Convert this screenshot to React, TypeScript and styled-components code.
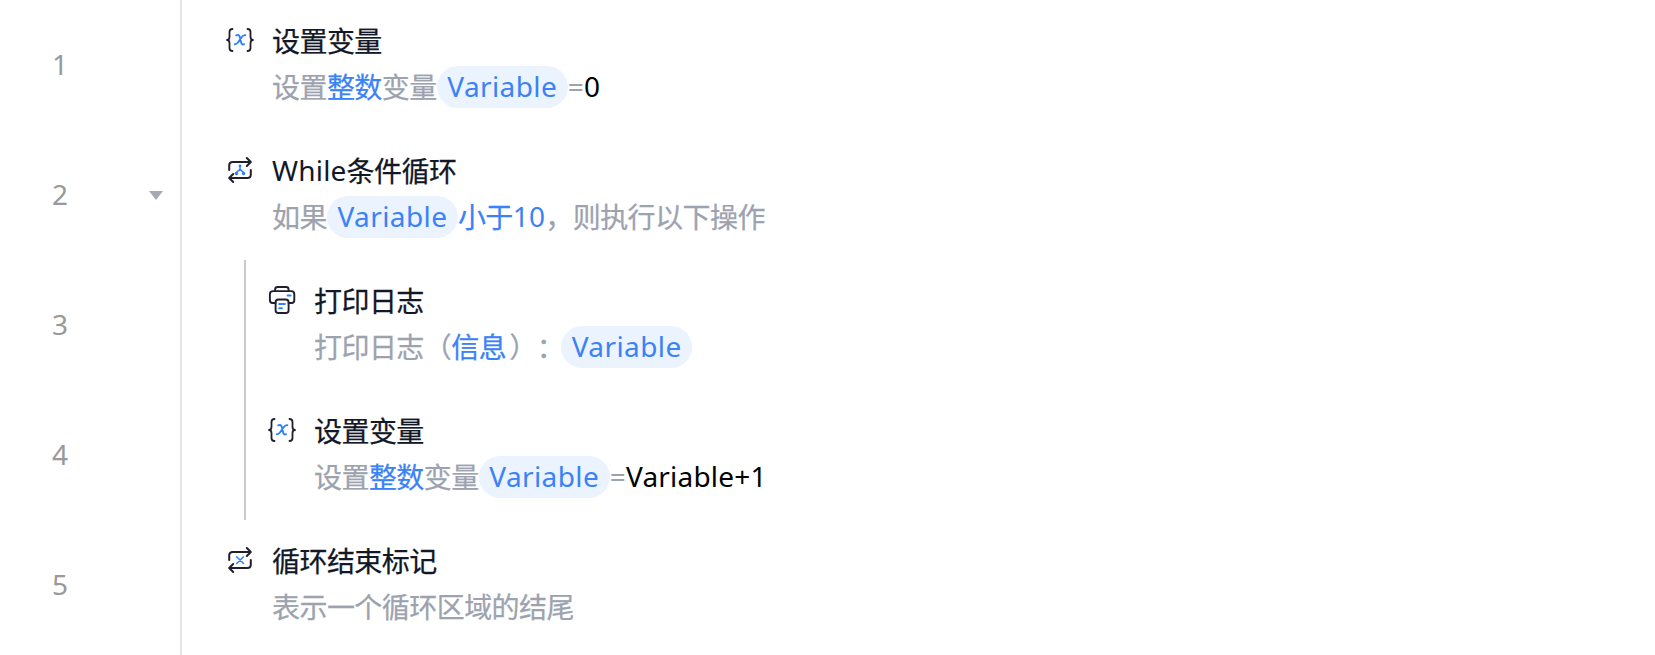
import React from 'react';
import styled, { createGlobalStyle } from 'styled-components';

const GlobalStyle = createGlobalStyle`
  * { box-sizing: border-box; }
  body { margin: 0; background: #fff; overflow: hidden; }
`;

const Page = styled.main`
  display: flex;
  width: 100%;
  height: 655px;
  overflow: hidden;
  background: #fff;
  font-family: 'Noto Sans', 'Noto Sans CJK SC', sans-serif;
  font-size: 28px;
`;

const Gutter = styled.aside`
  flex: none;
  width: 182px;
  border-right: 2px solid #e5e6eb;
`;

const GutterRow = styled.div`
  display: flex;
  align-items: center;
  justify-content: space-between;
  height: 130px;
  padding: 0 17px 0 52px;
  color: #999;
`;

const LineNumber = styled.span`
  padding-bottom: 3px;
`;

const Flow = styled.section`
  flex: 1;
  padding-left: 43px;
`;

const Nested = styled.div`
  margin-left: 19px;
  padding-left: 21px;
  border-left: 2px solid #c9c9c9;
`;

const Step = styled.article`
  display: flex;
  gap: 17px;
  height: 130px;
  padding-top: 20px;
`;

const IconSlot = styled.div`
  flex: none;
  width: 30px;
  height: 40px;
  display: flex;
  align-items: center;
  svg { display: block; }
`;

const Body = styled.div`
  display: flex;
  flex-direction: column;
  gap: 4px;
`;

const Line = styled.div<{ $tone: string }>`
  display: flex;
  align-items: center;
  height: 42px;
  padding-bottom: 2px;
  line-height: 40px;
  white-space: nowrap;
  color: ${(p) => p.$tone};
`;

const Han = styled.span<{ $accent?: boolean }>`
  font-family: 'Noto Sans CJK SC', sans-serif;
  letter-spacing: -0.55px;
  text-spacing-trim: space-all;
  -webkit-text-stroke: 0.25px currentColor;
  ${(p) => p.$accent && 'color: #3b82f6;'}
`;

const ClosingMark = styled(Han)`
  width: 27.5px;
  padding-left: 3px;
`;

const Latin = styled.span<{ $color?: string }>`
  letter-spacing: 0.2px;
  color: ${(p) => p.$color ?? 'inherit'};
`;

const Pill = styled.span`
  flex: none;
  align-self: flex-start;
  width: 131px;
  height: 42px;
  border-radius: 21px;
  background: #ebf3ff;
  color: #3b82f6;
  text-align: center;
  letter-spacing: 0.4px;
`;

const INK = '#111827';
const MUTED = '#9ca3af';
const BLUE = '#3b82f6';

const BracesIcon = () => (
  <svg width="30" height="30" viewBox="0 0 30 30" fill="none" strokeLinecap="round" strokeLinejoin="round">
    <g stroke="#211f2d" strokeWidth="1.8">
      <path d="M7.5 4C5 4 4.500 5 4.500 7V11.700C4.500 13.700 3.500 15 2 15C3.500 15 4.500 16.300 4.500 18.300V23C4.500 25 5 26 7.500 26" />
      <path d="M22.500 4C25 4 25.500 5 25.500 7V11.700C25.500 13.700 26.500 15 28 15C26.500 15 25.500 16.300 25.500 18.300V23C25.500 25 25 26 22.500 26" />
    </g>
    <path d="M11.200 10.300c2-.8 3.100-.2 3.600 1.600l1.300 5.400c.4 1.900 1.200 2.700 3 1.900M20.300 10.200c-1.600-.3-2.700.6-3.900 2.300l-2.700 4.100c-1.200 1.900-2.200 2.900-3.900 2.600" stroke="#2f80ff" strokeWidth="1.900" />
  </svg>
);

const LoopIcon = ({ children }: { children: React.ReactNode }) => (
  <svg width="30" height="30" viewBox="0 0 30 30" fill="none" strokeLinecap="round" strokeLinejoin="round">
    <g stroke="#211f2d" strokeWidth="2">
      <path d="M4.200 15V10.500c0-2.200 1.200-3.500 3.500-3.500h18M21.800 3l4 4-4 4" />
      <path d="M25.800 15v4.500c0 2.200-1.200 3.500-3.500 3.500h-18M8.200 19l-4 4 4 4" />
    </g>
    <g stroke="#2f80ff" strokeWidth="1.500">{children}</g>
  </svg>
);

const WhileIcon = () => (
  <LoopIcon>
    <path d="M15 11.500v2.700M15 14.200l-3.400 3.200M15 14.200l3.400 3.200" />
    <g fill="#2f80ff" stroke="none">
      <circle cx="15" cy="10.900" r="1.400" />
      <circle cx="11.400" cy="18.500" r="1.700" />
      <circle cx="18.600" cy="18.500" r="1.700" />
    </g>
  </LoopIcon>
);

const EndIcon = () => (
  <LoopIcon>
    <path d="M11.700 11.700l6.800 6.800M18.500 11.700l-6.800 6.800" />
  </LoopIcon>
);

const PrinterIcon = () => (
  <svg width="30" height="30" viewBox="-0.6 0 30 30" fill="none" strokeLinecap="round" strokeLinejoin="round">
    <g stroke="#211f2d" strokeWidth="1.900">
      <path d="M7.500 6V4.500c0-1.500.9-2.500 2.500-2.500h8.500c1.600 0 2.500 1 2.500 2.500V6" />
      <path d="M8 18H5c-1.700 0-2.700-1-2.700-2.700V9.200c0-1.900 1.200-3.100 3.100-3.100h18.200c1.900 0 3.100 1.200 3.100 3.100v6.100c0 1.700-1 2.700-2.700 2.700h-3" />
      <path d="M10.800 14.500h7.400c1.800 0 2.800 1 2.800 2.800v7.900c0 1.800-1 2.800-2.800 2.800h-7.400c-1.800 0-2.800-1-2.800-2.800v-7.900c0-1.800 1-2.800 2.800-2.800z" />
    </g>
    <path d="M20 10.500h3M11.600 19h5.700M11.600 23.200h2.700" stroke="#2f80ff" strokeWidth="1.900" />
  </svg>
);

const Caret = () => (
  <svg width="14" height="9" viewBox="0 0 14 9">
    <path d="M0 0h14L7 9z" fill="#a5a9b4" />
  </svg>
);

type StepRowProps = { icon: React.ReactNode; title: React.ReactNode; children: React.ReactNode };

const StepRow = ({ icon, title, children }: StepRowProps) => (
  <Step>
    <IconSlot>{icon}</IconSlot>
    <Body>
      <Line $tone={INK}>{title}</Line>
      <Line $tone={MUTED}>{children}</Line>
    </Body>
  </Step>
);

const Assignment = ({ value }: { value: string }) => (
  <StepRow icon={<BracesIcon />} title={<Han>设置变量</Han>}>
    <Han>设置</Han>
    <Han $accent>整数</Han>
    <Han>变量</Han>
    <Pill>Variable</Pill>
    <Latin>=</Latin>
    <Latin $color="#000">{value}</Latin>
  </StepRow>
);

export default function App() {
  return (
    <>
      <GlobalStyle />
      <Page>
        <Gutter>
          {[1, 2, 3, 4, 5].map((n) => (
            <GutterRow key={n}>
              <LineNumber>{n}</LineNumber>
              {n === 2 && <Caret />}
            </GutterRow>
          ))}
        </Gutter>
        <Flow>
          <Assignment value="0" />
          <StepRow
            icon={<WhileIcon />}
            title={
              <>
                <Latin>While</Latin>
                <Han>条件循环</Han>
              </>
            }
          >
            <Han>如果</Han>
            <Pill>Variable</Pill>
            <Han $accent>小于</Han>
            <Latin $color={BLUE}>10</Latin>
            <Han>，则执行以下操作</Han>
          </StepRow>
          <Nested>
            <StepRow icon={<PrinterIcon />} title={<Han>打印日志</Han>}>
              <Han>打印日志（</Han>
              <Han $accent>信息</Han>
              <ClosingMark>）</ClosingMark>
              <ClosingMark>：</ClosingMark>
              <Pill>Variable</Pill>
            </StepRow>
            <Assignment value="Variable+1" />
          </Nested>
          <StepRow icon={<EndIcon />} title={<Han>循环结束标记</Han>}>
            <Han>表示一个循环区域的结尾</Han>
          </StepRow>
        </Flow>
      </Page>
    </>
  );
}
